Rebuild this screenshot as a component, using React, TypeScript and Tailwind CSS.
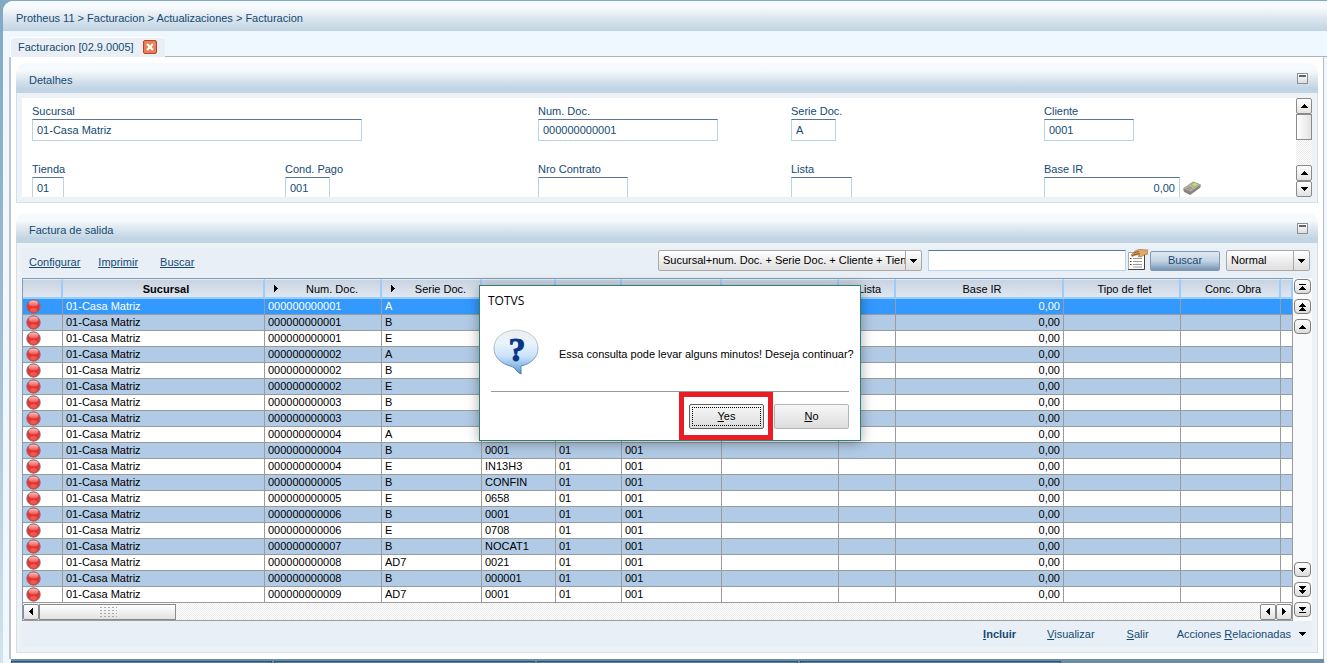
import type { ReactNode } from "react";

type Row = {
  doc: string;
  serie: string;
  cliente?: string;
};

const rows: Row[] = [
  { doc: "000000000001", serie: "A" },
  { doc: "000000000001", serie: "B" },
  { doc: "000000000001", serie: "E" },
  { doc: "000000000002", serie: "A" },
  { doc: "000000000002", serie: "B" },
  { doc: "000000000002", serie: "E" },
  { doc: "000000000003", serie: "B" },
  { doc: "000000000003", serie: "E" },
  { doc: "000000000004", serie: "A" },
  { doc: "000000000004", serie: "B", cliente: "0001" },
  { doc: "000000000004", serie: "E", cliente: "IN13H3" },
  { doc: "000000000005", serie: "B", cliente: "CONFIN" },
  { doc: "000000000005", serie: "E", cliente: "0658" },
  { doc: "000000000006", serie: "B", cliente: "0001" },
  { doc: "000000000006", serie: "E", cliente: "0708" },
  { doc: "000000000007", serie: "B", cliente: "NOCAT1" },
  { doc: "000000000008", serie: "AD7", cliente: "0021" },
  { doc: "000000000008", serie: "B", cliente: "000001" },
  { doc: "000000000009", serie: "AD7", cliente: "0001" },
];

const arrowPaths = {
  up: "M4 0h1v1h1v1h1v1h1v1H1V3h1V2h1V1h1z",
  down: "M1 0h7v1H7v1H6v1H5v1H4V3H3V2H2V1H1z",
  left: "M4 0v7H3V6H2V5H1V4H0V3h1V2h1V1h1V0z",
  right: "M0 0v7h1V6h1V5h1V4h1V3H3V2H2V1H1V0z",
};

function Arrow({ dir }: { dir: keyof typeof arrowPaths }) {
  const vertical = dir === "up" || dir === "down";
  return (
    <svg width={vertical ? 9 : 4} height={vertical ? 4 : 7} fill="#000" shapeRendering="crispEdges" className="shrink-0">
      <path d={arrowPaths[dir]} />
    </svg>
  );
}

function ScrollButton({ dir, label }: { dir: keyof typeof arrowPaths; label: string }) {
  return (
    <button
      aria-label={label}
      className="flex h-4 w-4 shrink-0 items-center justify-center rounded-[2px] border border-[#8a8a8a] bg-linear-to-b from-white to-[#e2e2e2]"
    >
      <Arrow dir={dir} />
    </button>
  );
}

function NavButton({ label, children }: { label: string; children: ReactNode }) {
  return (
    <button
      aria-label={label}
      className="flex h-[15px] w-[17px] flex-col items-center justify-center rounded-[4px] border border-[#7d7d7d] bg-linear-to-b from-white to-[#dcdcdc]"
    >
      {children}
    </button>
  );
}

function Panel({ title, children }: { title: string; children: ReactNode }) {
  return (
    <section>
      <header className="flex h-[30px] items-center justify-between rounded-t-[10px] bg-linear-to-b from-[#f6fafc] from-25% via-[#dae5ee] via-55% to-[#c1d4e4] to-85% pt-1 pr-2.5 pl-[13px]">
        <h2>{title}</h2>
        <button
          aria-label={`Minimizar ${title}`}
          className="mb-1 h-[11px] w-[11px] border border-[#8b9095] bg-linear-to-b from-white to-[#dcdcdc] p-px"
        >
          <span className="block h-0.5 bg-[#5d656d]" />
          <span className="block h-[5px]" />
        </button>
      </header>
      <div className="border-x border-b border-[#d3e0ea] bg-[#edf2f7] p-[5px]">{children}</div>
    </section>
  );
}

type FieldProps = {
  id: string;
  label: string;
  value?: string;
  width: string;
  span?: string;
  right?: boolean;
  children?: ReactNode;
};

function Field({ id, label, value = "", width, span = "", right, children }: FieldProps) {
  return (
    <div className={`h-[58px] ${span}`}>
      <label htmlFor={id} className="block leading-[15px]">
        {label}
      </label>
      <div className="flex items-center gap-[3px]">
        <input
          id={id}
          defaultValue={value}
          className={`h-[22px] border border-[#b9d4ea] border-t-[#5b7795] bg-white px-1 outline-none ${width} ${right ? "text-right" : ""}`}
        />
        {children}
      </div>
    </div>
  );
}

function Calculator() {
  return (
    <svg width="18" height="14" viewBox="0 0 18 14">
      <path d="M.5 7.500v2.500l6.500 3.500L17.500 6V3.500l-10 7z" fill="#8a837b" />
      <path d="M.5 7.500L10 .8l7.500 3-10 6.700z" fill="#bbb6aa" stroke="#8d867b" strokeWidth=".6" />
      <path d="M8 3.800L11.500 1.400 16 3.300l-4 2.500z" fill="#b9e072" stroke="#8f9a78" strokeWidth=".5" />
      <path d="M3.500 7l4 1.700M5.500 5.700l4 1.700" stroke="#857b70" strokeWidth=".9" />
      <path d="M1 10.500l6.500 3L17.500 6" fill="none" stroke="#5f5850" strokeWidth=".6" />
    </svg>
  );
}

function FilterIcon() {
  return (
    <svg width="20" height="21" viewBox="0 0 20 21">
      <path d="M.5 3.500h16v17H.5z" fill="#fff" stroke="#aaa" />
      <path d="M16.500 5v15.500H0" fill="none" stroke="#454545" />
      <path d="M2 9.500h1.500M2 12.500h1.500M2 15.500h1.500" stroke="#333" />
      <path d="M5 9.500h9M5 12.500h9M5 15.500h9M5 18h9" stroke="#999" />
      <path d="M3 6l4-4 4-1.500 9 .5v4l-4 1-3 2-3-.5 2-1.500H8L4 7.500z" fill="#e0aa6d" stroke="#9c6836" strokeWidth=".6" />
      <path d="M6 4l5-1.500M7 5.500l5-1M4 6.500l3-1" stroke="#734219" strokeWidth=".8" />
    </svg>
  );
}

function QuestionBubble() {
  return (
    <svg width="46" height="46" viewBox="0 0 46 46" className="shrink-0">
      <defs>
        <linearGradient id="bubbleEdge" x1="0" y1="0" x2="0" y2="1">
          <stop offset="0" stopColor="#c9cdd2" />
          <stop offset=".5" stopColor="#9fb0c0" />
          <stop offset="1" stopColor="#42709e" />
        </linearGradient>
        <linearGradient id="bubbleFill" x1="0" y1="0" x2="0" y2="1">
          <stop offset="0" stopColor="#eceef1" />
          <stop offset=".3" stopColor="#eaf3fd" />
          <stop offset=".6" stopColor="#c9e2fb" />
          <stop offset="1" stopColor="#5b98d6" />
        </linearGradient>
      </defs>
      <path
        d="M23 1C10 1 1 9 1 19.500 1 28 8 35 19 37.500c3 1 5 6 9 7.500v-8C38 35 45 28 45 19.500 45 9 36 1 23 1z"
        fill="url(#bubbleFill)"
        stroke="url(#bubbleEdge)"
      />
      <text
        x="24"
        y="32"
        textAnchor="middle"
        fontFamily="Liberation Serif, serif"
        fontWeight="700"
        fontSize="34"
        fill="#06358a"
        stroke="#06358a"
        strokeWidth="1"
      >
        ?
      </text>
    </svg>
  );
}

function StatusBall() {
  return (
    <svg width="15" height="15" viewBox="0 0 15 15" className="ml-[3px] block">
      <defs>
        <linearGradient id="ballShine" x1="0" y1="0" x2="0" y2="1">
          <stop offset="0" stopColor="#fff" stopOpacity=".7" />
          <stop offset="1" stopColor="#fff" stopOpacity=".15" />
        </linearGradient>
      </defs>
      <circle cx="7.500" cy="7.500" r="6.700" fill="#e53434" stroke="#8f6f70" strokeWidth="1" />
      <ellipse cx="7.500" cy="11" rx="3.500" ry="2" fill="#f5564f" />
      <ellipse cx="7.500" cy="4.500" rx="4.700" ry="3" fill="url(#ballShine)" />
    </svg>
  );
}

const headCell =
  "h-5 border-t border-r-2 border-b-2 border-t-[#e4eaf2] border-r-[#99ccff] border-b-[#99ccff] bg-linear-to-b from-[#c9d3e1] to-[#dfe7f0] p-0 pl-1.5 leading-4 font-normal";
const bodyCell = "h-4 overflow-hidden border-r border-b border-[#9b9b9b] p-0 px-[3px] leading-[15px] whitespace-nowrap";
const dots = "bg-[conic-gradient(#fff_25%,#ececec_0_50%,#fff_0_75%,#ececec_0)] bg-size-[2px_2px]";

function InvoiceTable() {
  return (
    <table className="w-full table-fixed border-separate border-spacing-0 text-black">
      <colgroup>
        <col className="w-[40px]" />
        <col className="w-[202px]" />
        <col className="w-[117px]" />
        <col className="w-[100px]" />
        <col className="w-[74px]" />
        <col className="w-[66px]" />
        <col className="w-[100px]" />
        <col className="w-[117px]" />
        <col className="w-[57px]" />
        <col className="w-[168px]" />
        <col className="w-[117px]" />
        <col className="w-[100px]" />
        <col />
      </colgroup>
      <thead>
        <tr>
          <th className={headCell} />
          <th className={headCell}>
            <b>Sucursal</b>
          </th>
          <th className={headCell}>
            <div className="flex items-center pl-[3px]">
              <Arrow dir="right" />
              <span className="flex-1 pl-1.5">Num. Doc.</span>
            </div>
          </th>
          <th className={headCell}>
            <div className="flex items-center pl-[3px]">
              <Arrow dir="right" />
              <span className="flex-1 pl-1.5">Serie Doc.</span>
            </div>
          </th>
          <th className={headCell} />
          <th className={headCell} />
          <th className={headCell} />
          <th className={headCell} />
          <th className={headCell}>Lista</th>
          <th className={headCell}>Base IR</th>
          <th className={headCell}>Tipo de flet</th>
          <th className={headCell}>Conc. Obra</th>
          <th className={headCell} />
        </tr>
      </thead>
      <tbody>
        {rows.map((row, i) => (
          <tr key={i} className={i === 0 ? "bg-[#3399ff] text-white" : i % 2 ? "bg-[#b1cae5]" : "bg-white"}>
            <td className="h-4 border-r border-b border-[#9b9b9b] p-0">
              <StatusBall />
            </td>
            <td className={bodyCell}>01-Casa Matriz</td>
            <td className={bodyCell}>{row.doc}</td>
            <td className={bodyCell}>{row.serie}</td>
            <td className={bodyCell}>{row.cliente}</td>
            <td className={bodyCell}>{row.cliente && "01"}</td>
            <td className={bodyCell}>{row.cliente && "001"}</td>
            <td className={bodyCell} />
            <td className={bodyCell} />
            <td className={`${bodyCell} text-right`}>0,00</td>
            <td className={bodyCell} />
            <td className={bodyCell} />
            <td className={bodyCell} />
          </tr>
        ))}
      </tbody>
    </table>
  );
}

function Toolbar() {
  return (
    <div className="flex h-[30px] items-center pb-[5px] pl-[7px]">
      <nav className="flex flex-1 pt-[3px] underline">
        <a href="#configurar" className="mr-[18px]">Configurar</a>
        <a href="#imprimir" className="mr-[22px]">Imprimir</a>
        <a href="#buscar">Buscar</a>
      </nav>
      <div className="relative flex">
        <select
          aria-label="Orden"
          className="h-[21px] w-[264px] appearance-none rounded-[2px] border border-[#a9a9a9] bg-linear-to-b from-white to-[#dedede] pl-1 text-black"
        >
          <option>Sucursal+num. Doc. + Serie Doc. + Cliente + Tien</option>
        </select>
        <span className="pointer-events-none absolute inset-y-px right-px flex w-4 items-center justify-center border-l border-[#a9a9a9]">
          <Arrow dir="down" />
        </span>
      </div>
      <input
        aria-label="Texto de busca"
        className="ml-1.5 h-[21px] w-[198px] border border-[#b9d4ea] border-t-[#5b7795] bg-white px-1 outline-none"
      />
      <button aria-label="Filtro" className="mb-[3px] ml-0.5">
        <FilterIcon />
      </button>
      <button className="ml-0.5 h-5 w-[70px] rounded-[2px] border border-[#8199b1] bg-linear-to-b from-[#dfe9f2] via-[#c3d3e2] to-[#7795b4]">
        Buscar
      </button>
      <div className="relative mr-0.5 ml-1.5 flex">
        <select
          aria-label="Modo"
          className="h-[21px] w-[84px] appearance-none rounded-[2px] border border-[#a9a9a9] bg-linear-to-b from-white to-[#dedede] pl-1 text-black"
        >
          <option>Normal</option>
        </select>
        <span className="pointer-events-none absolute inset-y-px right-px flex w-4 items-center justify-center border-l border-[#a9a9a9]">
          <Arrow dir="down" />
        </span>
      </div>
    </div>
  );
}

function ConfirmDialog() {
  const button = "h-[25px] w-[75px] rounded-[2px] border bg-linear-to-b from-[#f7f7f7] to-[#dddddd] p-0.5";
  return (
    <div
      role="dialog"
      aria-labelledby="dialog-title"
      className="absolute top-[285px] left-[479px] w-[382px] border border-[#2f7f74] bg-white px-[11px] pb-[11px] text-black shadow-[0_2px_12px_rgba(0,0,0,0.35)]"
    >
      <h2 id="dialog-title" className="-ml-[3px] pt-1.5 font-['Open_Sans',sans-serif] text-[12px] leading-[18px]">
        TOTVS
      </h2>
      <div className="flex h-[82px] items-center gap-5 border-b border-[#9b9b9b] pt-[3px] pl-0.5">
        <QuestionBubble />
        <p className="pt-1 whitespace-nowrap">Essa consulta pode levar alguns minutos! Deseja continuar?</p>
      </div>
      <div className="flex justify-end gap-2.5 pt-3">
        <div className="relative flex">
          <button className={`${button} border-[#606060]`}>
            <span className="flex h-full items-center justify-center border border-dotted border-black">
              <span>
                <u>Y</u>es
              </span>
            </span>
          </button>
          <span className="pointer-events-none absolute -top-3 -right-[9px] -bottom-[11px] -left-2.5 border-[5px] border-[#ea1c24]" />
        </div>
        <button className={`${button} border-[#b5b5b5]`}>
          <u>N</u>o
        </button>
      </div>
    </div>
  );
}

export default function App() {
  return (
    <div className="relative flex min-h-screen flex-col overflow-hidden bg-linear-to-b from-[#82a9c2] via-[#9dbbd0] to-[#d5e3ec] pt-px pl-[3px] font-['Liberation_Sans',Arial,sans-serif] text-[11px] leading-[13px] text-[#154a73]">
      <div className="flex flex-1 flex-col rounded-tl-[10px] bg-[#eff7ff]">
        <header className="h-[30px] rounded-tl-[10px] bg-linear-to-b from-[#f8fbfd] from-20% via-[#dae5ee] via-60% to-[#c1d4e4] pt-[11px] pl-[13px]">
          Protheus 11 &gt; Facturacion &gt; Actualizaciones &gt; Facturacion
        </header>

        <div className="flex items-end pt-1.5 pl-[7px]">
          <div className="flex h-5 w-[155px] items-center rounded-t-[4px] border-t border-l border-white bg-[#e9eff4] pb-px pl-[7px]">
            <span className="w-[125px]">Facturacion [02.9.0005]</span>
            <button
              aria-label="Cerrar"
              className="flex h-[14px] w-[14px] items-center justify-center rounded-[2px] border border-[#bd4128] bg-[#e58059]"
            >
              <svg width="8" height="8" viewBox="0 0 8 8">
                <path d="M1 1l6 6M7 1L1 7" stroke="#fff" strokeWidth="2.200" />
              </svg>
            </button>
          </div>
          <div className="h-px flex-1 bg-[#b0b4b8]" />
        </div>

        <main className="mr-[3px] ml-1.5 flex-1 border-r border-l-2 border-r-[#b5bcc4] border-l-[#bfc5cb] bg-white px-[5px] pt-1.5 pb-1.5">
          <div className="flex flex-col gap-2.5">
            <Panel title="Detalhes">
              <div className="flex h-[99px] overflow-hidden bg-white">
                <div className="-mr-px grid flex-1 grid-cols-5 content-start pt-1.5 pl-2.5">
                  <Field id="sucursal" label="Sucursal" value="01-Casa Matriz" width="w-[330px]" span="col-span-2" />
                  <Field id="num" label="Num. Doc." value="000000000001" width="w-[180px]" />
                  <Field id="serie" label="Serie Doc." value="A" width="w-[45px]" />
                  <Field id="cliente" label="Cliente" value="0001" width="w-[90px]" />
                  <Field id="tienda" label="Tienda" value="01" width="w-8" />
                  <Field id="cond" label="Cond. Pago" value="001" width="w-[45px]" />
                  <Field id="contrato" label="Nro Contrato" width="w-[90px]" />
                  <Field id="lista" label="Lista" width="w-[61px]" />
                  <Field id="base" label="Base IR" value="0,00" width="w-[136px]" right>
                    <Calculator />
                  </Field>
                </div>
                <div className={`flex w-4 flex-col ${dots}`}>
                  <ScrollButton dir="up" label="Subir" />
                  <div className="h-[26px] border border-[#8a8a8a] bg-linear-to-r from-white to-[#e2e2e2]" />
                  <div className="flex-1" />
                  <ScrollButton dir="up" label="Subir linea" />
                  <ScrollButton dir="down" label="Bajar linea" />
                </div>
              </div>
            </Panel>

            <Panel title="Factura de salida">
              <div className="bg-[#e8eff6]">
                <Toolbar />
                <div className="flex">
                  <div className="min-w-0 flex-1 border-t border-l border-[#7f9db9]">
                    <InvoiceTable />
                    <div className={`flex h-[18px] items-center border-r border-b border-[#9b9b9b] ${dots}`}>
                      <ScrollButton dir="left" label="Izquierda" />
                      <div className="flex h-4 w-[137px] items-center justify-center border border-[#8a8a8a] bg-linear-to-b from-white to-[#e2e2e2]">
                        <div className="h-[11px] w-[18px] bg-[radial-gradient(#a9a9a9_1px,transparent_1px)] bg-size-[4px_3px]" />
                      </div>
                      <div className="flex-1" />
                      <ScrollButton dir="left" label="Columna anterior" />
                      <ScrollButton dir="right" label="Columna siguiente" />
                    </div>
                  </div>
                  <div className="flex w-[19px] flex-col justify-between bg-[#f9fafc] pt-px pb-1 pl-px">
                    <div className="flex flex-col gap-[5px]">
                      <NavButton label="Primero">
                        <span className="mb-px h-px w-[7px] bg-black" />
                        <Arrow dir="up" />
                      </NavButton>
                      <NavButton label="Pagina anterior">
                        <Arrow dir="up" />
                        <Arrow dir="up" />
                      </NavButton>
                      <NavButton label="Anterior">
                        <Arrow dir="up" />
                      </NavButton>
                    </div>
                    <div className="flex flex-col gap-[5px]">
                      <NavButton label="Siguiente">
                        <Arrow dir="down" />
                      </NavButton>
                      <NavButton label="Pagina siguiente">
                        <Arrow dir="down" />
                        <Arrow dir="down" />
                      </NavButton>
                      <NavButton label="Ultimo">
                        <Arrow dir="down" />
                        <span className="mt-px h-px w-[7px] bg-black" />
                      </NavButton>
                    </div>
                  </div>
                </div>
                <footer className="flex h-[26px] items-center justify-end pr-[5px]">
                  <button className="mr-[31px] font-bold">
                    <u>I</u>ncluir
                  </button>
                  <button className="mr-8">
                    <u>V</u>isualizar
                  </button>
                  <button className="mr-7">
                    <u>S</u>alir
                  </button>
                  <button className="flex items-center gap-[7px]">
                    <span>
                      Acciones <u>R</u>elacionadas
                    </span>
                    <Arrow dir="down" />
                  </button>
                </footer>
              </div>
            </Panel>
          </div>
        </main>

        <div className="mr-[3px] ml-2 flex h-1 gap-0.5 bg-[#6d8da3] pt-0.5">
          <span className="w-[261px] border-x border-t border-[#2f5069] bg-[#5a87a8]" />
          <span className="w-[261px] border-x border-t border-[#2f5069] bg-[#5a87a8]" />
          <span className="w-[261px] border-x border-t border-[#2f5069] bg-[#5a87a8]" />
          <span className="w-[261px] border-x border-t border-[#2f5069] bg-[#5a87a8]" />
        </div>
      </div>

      <ConfirmDialog />
    </div>
  );
}
